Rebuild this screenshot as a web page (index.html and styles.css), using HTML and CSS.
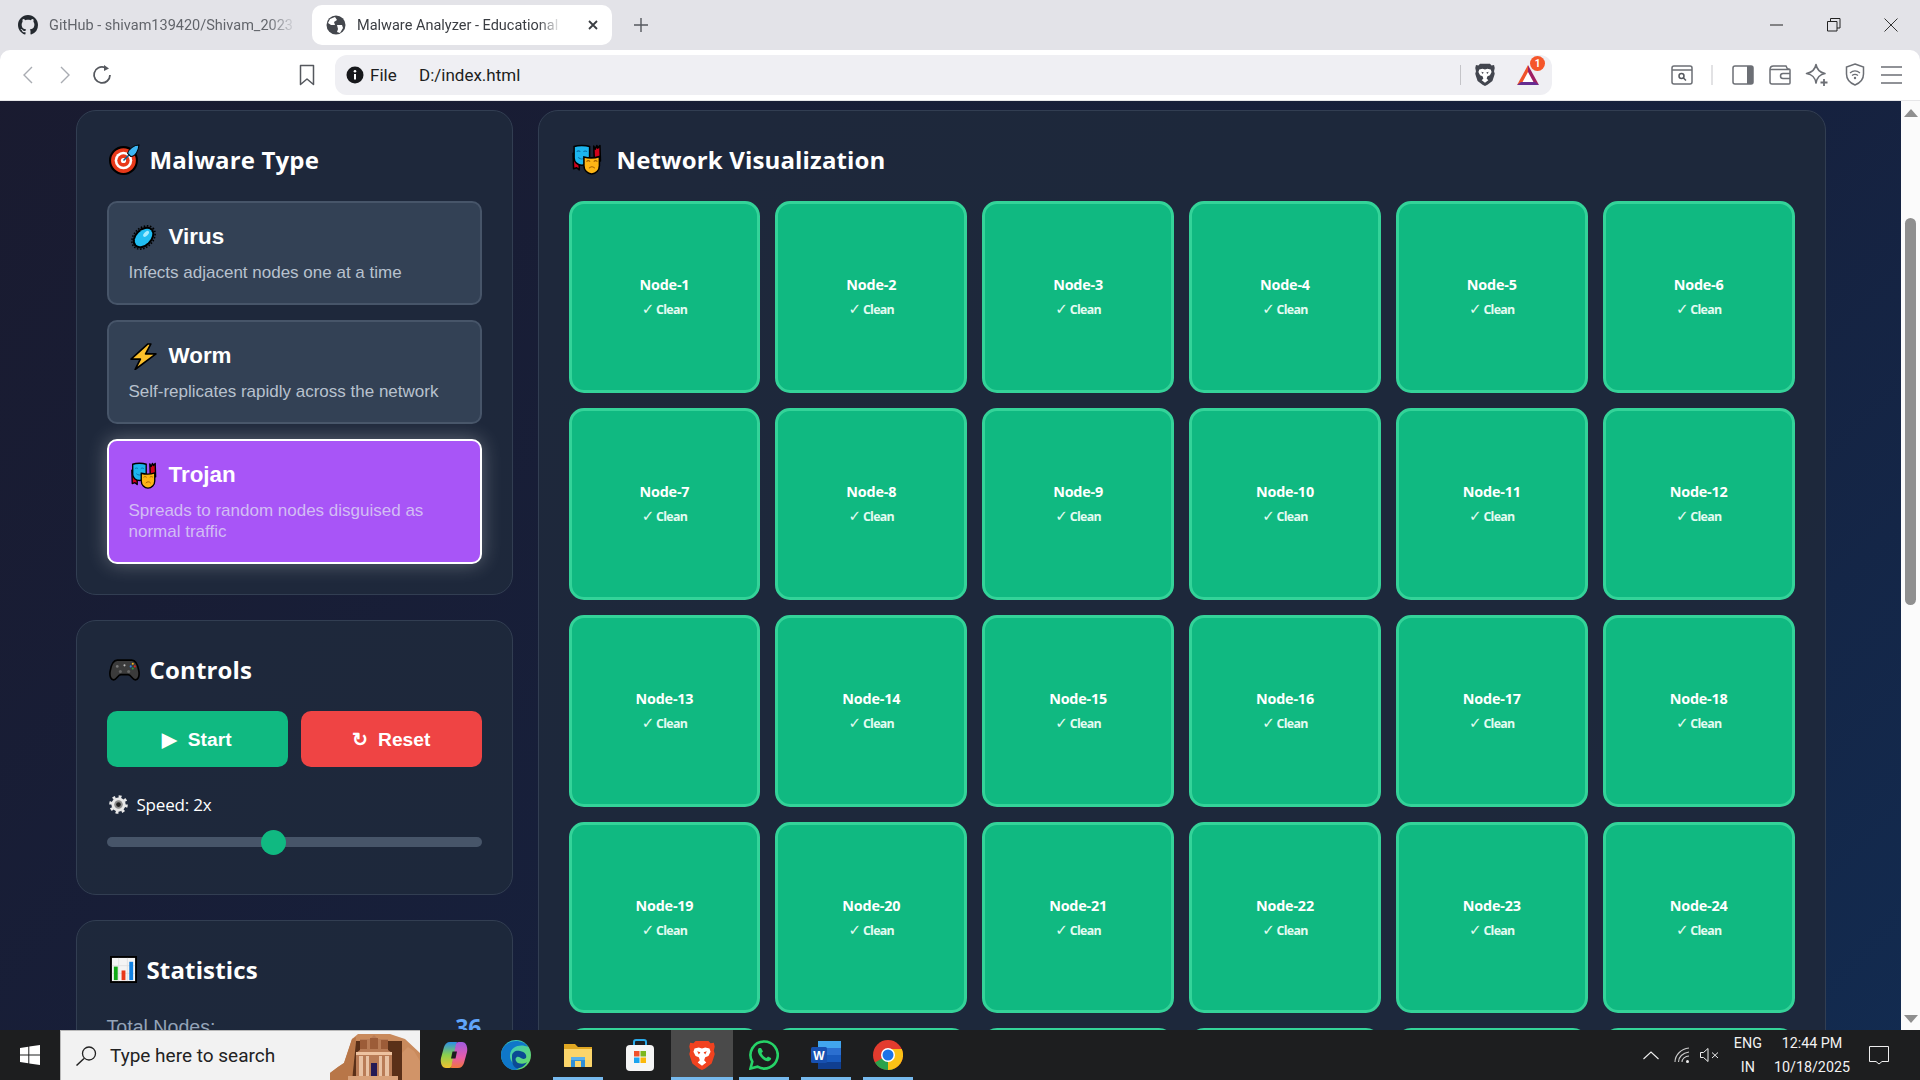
FILE: index.html
```html
<!DOCTYPE html>
<html lang="en">
<head>
<meta charset="utf-8">
<title>Malware Analyzer</title>
<link rel="stylesheet" href="styles.css">
</head>
<body>
<svg class="defs" width="0" height="0" aria-hidden="true">
  <symbol id="masks" viewBox="0 0 30 30">
    <path d="M2 9l.5 15 3-1 2.500 2V10z" fill="#d0021b" stroke="#000" stroke-width="1.500" stroke-linejoin="round"/>
    <path d="M22 2l1.500 3L25 1.500l1 2.500 2-2.500.5 15-6-2z" fill="#d0021b" stroke="#000" stroke-width="1.500" stroke-linejoin="round"/>
    <path d="M3 2.500c4-1.500 11-1.500 15 0v11c0 4-3.500 7-7.500 7S3 17.500 3 13.500z" fill="#1cb5ee" stroke="#000" stroke-width="1.500"/>
    <path d="M5.500 7.500c1-1 2.500-1 3.500 0M12 7.500c1-1 2.500-1 3.500 0M7 13c2 2 5 2 7 0" fill="none" stroke="#0a6fa8" stroke-width="1"/>
    <path d="M12.500 12.500c5 1.300 10 1.300 15-.5v9c0 4.500-3.500 8-7.500 8s-7.500-3.500-7.500-8z" fill="#fdb515" stroke="#000" stroke-width="1.500"/>
    <path d="M15 17c1-1 2.500-1 3.500 0M22 17c1-1 2.500-1 3.500 0M17.500 23.500c1.500-2 4-2 5.500 0" fill="none" stroke="#a35f00" stroke-width="1"/>
  </symbol>
  <symbol id="lion" viewBox="0 0 24 28">
    <path d="M6 1h12l2 2 3-.5L24 6l-1 4 1 3-3 9-6 4.500-3 1.500-3-1.500L3 22 0 13l1-3-1-4 1-3.500L4 3z" fill="currentColor"/>
    <path d="M5 8l4-1 3 1 3-1 4 1 1 3-2 4-3 1-1 3 2 2-4 3-4-3 2-2-1-3-3-1-2-4z" fill="#fff"/>
    <path d="M7.500 10.500l3 1-1.500 2zM16.500 10.500l-3 1 1.500 2z" fill="currentColor"/>
  </symbol>
</svg>
<div class="app">
  <header class="tabstrip">
    <div class="tab">
      <svg class="tab-ico" viewBox="0 0 16 16"><path fill="#24292f" d="M8 0C3.58 0 0 3.58 0 8c0 3.54 2.29 6.53 5.47 7.59.4.07.55-.17.55-.38 0-.19-.01-.82-.01-1.49-2.01.37-2.53-.49-2.69-.94-.09-.23-.48-.94-.82-1.13-.28-.15-.68-.52-.01-.53.63-.01 1.08.58 1.23.82.72 1.21 1.87.87 2.33.66.07-.52.28-.87.51-1.07-1.78-.2-3.64-.89-3.64-3.95 0-.87.31-1.59.82-2.15-.08-.2-.36-1.02.08-2.12 0 0 .67-.21 2.2.82.64-.18 1.32-.27 2-.27s1.36.09 2 .27c1.53-1.04 2.2-.82 2.2-.82.44 1.1.16 1.92.08 2.12.51.56.82 1.27.82 2.15 0 3.07-1.87 3.75-3.65 3.95.29.25.54.73.54 1.48 0 1.07-.01 1.93-.01 2.2 0 .21.15.46.55.38A8.013 8.013 0 0016 8c0-4.42-3.58-8-8-8z"/></svg>
      <span class="tab-title tab-title-dim">GitHub - shivam139420/Shivam_2023</span>
    </div>
    <div class="tab tab-active">
      <svg class="tab-ico tab-ico-globe" viewBox="0 0 20 20"><circle cx="10" cy="10" r="9.500" fill="#44474d"/><path d="M4 4l5-2 2 3-3 2 1 3-4 0-3-2zM11 10l5 0 1 3-3 5-3-1 1-3z" fill="#fff"/></svg>
      <span class="tab-title">Malware Analyzer - Educational Malware</span>
      <svg class="tab-close" viewBox="0 0 12 12"><path d="M2 2l8 8M10 2l-8 8" stroke="#3a3d42" stroke-width="1.800" fill="none"/></svg>
    </div>
    <svg class="newtab" viewBox="0 0 16 16"><path d="M8 1v14M1 8h14" stroke="#55585e" stroke-width="1.400" fill="none"/></svg>
    <div class="winctl">
      <svg class="winbtn" viewBox="0 0 14 14"><path d="M0 7h13" stroke="#222" stroke-width="1" fill="none"/></svg>
      <svg class="winbtn" viewBox="0 0 14 14"><path d="M.5 3.500h9.500v9.500H.5zM3.500 3.500V.5h9.500v9.500H10" stroke="#222" stroke-width="1" fill="none"/></svg>
      <svg class="winbtn" viewBox="0 0 14 14"><path d="M.5.5l13 13M13.500.5l-13 13" stroke="#333" stroke-width="1" fill="none"/></svg>
    </div>
  </header>

  <nav class="toolbar">
    <span class="tb-slot"><svg width="12" height="20" viewBox="0 0 12 20"><path d="M10 2L2 10l8 8" stroke="#a9acb2" stroke-width="1.400" fill="none"/></svg></span>
    <span class="tb-slot"><svg width="12" height="20" viewBox="0 0 12 20"><path d="M2 2l8 8-8 8" stroke="#a9acb2" stroke-width="1.400" fill="none"/></svg></span>
    <span class="tb-slot"><svg width="22" height="22" viewBox="0 0 22 22"><path d="M14 3.500A8 8 0 1 0 19 11" stroke="#55585e" stroke-width="1.800" fill="none"/><path d="M13 1l5 3.500-5 2.500z" fill="#55585e"/></svg></span>
    <span class="tb-slot tb-bookmark"><svg width="16" height="22" viewBox="0 0 16 22"><path d="M1.500 1.500h13v19L8 15l-6.500 5.500z" stroke="#55585e" stroke-width="1.500" fill="none" stroke-linejoin="round"/></svg></span>
    <div class="address">
      <svg class="info" viewBox="0 0 18 18"><circle cx="9" cy="9" r="8.500" fill="#17181b"/><path d="M9 8v5.500" stroke="#fff" stroke-width="2"/><circle cx="9" cy="5.200" r="1.300" fill="#fff"/></svg>
      <span class="addr-scheme">File</span>
      <span class="addr-url">D:/index.html</span>
      <span class="addr-fill"></span>
      <span class="addr-sep"></span>
      <svg class="addr-lion" viewBox="0 0 24 28"><use href="#lion"/></svg>
      <span class="bat">
        <svg width="24" height="22" viewBox="0 0 24 22"><path d="M12 1l11 20H1z" fill="#fff"/><path d="M12 1L1 21l5-2 6-11z" fill="#f0532b"/><path d="M12 1l11 20-5-2-6-11z" fill="#9e1f63"/><path d="M1 21h22l-4-3H5z" fill="#662d91"/></svg>
        <span class="bat-badge">1</span>
      </span>
    </div>
    <span class="tb-slot tb-gap-r"><svg width="22" height="20" viewBox="0 0 22 20"><rect x="1" y="1" width="20" height="18" rx="2" stroke="#6c6f75" stroke-width="1.500" fill="none"/><path d="M1 5h20" stroke="#6c6f75" stroke-width="1.500"/><circle cx="10.500" cy="11" r="2.500" stroke="#55585e" stroke-width="1.500" fill="none"/><path d="M12.500 13l2.500 2.500" stroke="#55585e" stroke-width="1.500"/></svg></span>
    <span class="tb-sep"></span>
    <span class="tb-slot"><svg width="22" height="20" viewBox="0 0 22 20"><rect x="1" y="1" width="20" height="18" rx="2" stroke="#6c6f75" stroke-width="1.500" fill="#fff"/><rect x="15" y="1" width="6" height="18" fill="#6c6f75"/></svg></span>
    <span class="tb-slot"><svg width="22" height="20" viewBox="0 0 22 20"><path d="M1 4.500C1 2.500 2.500 1 4.500 1H17l1.500 3H20a1 1 0 0 1 1 1v13a1 1 0 0 1-1 1H3a2 2 0 0 1-2-2z" stroke="#6c6f75" stroke-width="1.500" fill="none"/><path d="M1 4.500h19M21 8.500h-7a2 2 0 0 0 0 5h7" stroke="#6c6f75" stroke-width="1.500" fill="none"/></svg></span>
    <span class="tb-slot"><svg width="24" height="24" viewBox="0 0 24 24"><path d="M11 1.500c1 5.500 3.500 8 9 9-5.500 1-8 3.500-9 9.500-1-6-3.500-8.500-9.500-9.500 6-1 8.500-3.500 9.500-9z" stroke="#6c6f75" stroke-width="1.600" fill="none" stroke-linejoin="round"/><path d="M19 16v7M15.500 19.500h7" stroke="#6c6f75" stroke-width="1.800"/></svg></span>
    <span class="tb-slot tb-nudge"><svg width="20" height="23" viewBox="0 0 20 23"><path d="M10 1l8.500 3v7c0 5.500-3.500 9-8.500 11-5-2-8.500-5.500-8.500-11V4z" stroke="#6c6f75" stroke-width="1.500" fill="none"/><path d="M5 10c3-2.500 7-2.500 10 0M7 12.500c2-1.500 4-1.500 6 0" stroke="#6c6f75" stroke-width="1.300" fill="none"/><circle cx="10" cy="15" r="1.200" fill="#6c6f75"/></svg></span>
    <span class="tb-slot"><svg width="21" height="18" viewBox="0 0 21 18"><path d="M0 1h21M0 9h21M0 17h21" stroke="#6c6f75" stroke-width="1.500"/></svg></span>
  </nav>

  <main class="viewport">
    <div class="page">
      <div class="layout">
        <aside class="sidebar">
          <section class="panel">
            <h2 class="panel-title">
              <svg class="emoji-lg" viewBox="0 0 30 30">
                <circle cx="14" cy="16" r="13" fill="#e8391a" stroke="#000" stroke-width="2"/>
                <circle cx="14" cy="16" r="8.500" fill="#fff"/>
                <circle cx="14" cy="16" r="6" fill="#e8391a"/>
                <circle cx="14" cy="16" r="2.500" fill="#fff"/>
                <path d="M14 16l8-8" stroke="#0b5e8e" stroke-width="1.500"/>
                <path d="M18 9c1-4 6-8 11-8-.5 5-3 11-8 11z" fill="#3db5f2" stroke="#000" stroke-width="1"/>
              </svg>
              <span>Malware Type</span>
            </h2>
            <div class="type-list">
              <article class="type-card">
                <div class="type-head">
                  <svg class="emoji-md" viewBox="0 0 26 26">
                    <ellipse cx="13" cy="13" rx="12" ry="8.500" transform="rotate(-45 13 13)" fill="#000"/>
                    <ellipse cx="13" cy="13" rx="12.800" ry="9.300" transform="rotate(-45 13 13)" fill="none" stroke="#000" stroke-width="1.500" stroke-dasharray="1.500 1.500"/>
                    <ellipse cx="13" cy="13" rx="10" ry="6.500" transform="rotate(-45 13 13)" fill="#21bdf2"/>
                    <ellipse cx="15.500" cy="9.500" rx="3.500" ry="1.800" transform="rotate(-45 15.500 9.500)" fill="#a6ecff"/>
                  </svg>
                  <span class="type-name">Virus</span>
                </div>
                <p class="type-desc">Infects adjacent nodes one at a time</p>
              </article>
              <article class="type-card">
                <div class="type-head">
                  <svg class="emoji-md" viewBox="0 0 26 26"><path d="M17 1L1 15.500h9l-5 10 20-15H15l5-9.500z" fill="#fcc02b" stroke="#000" stroke-width="1.600" stroke-linejoin="round"/></svg>
                  <span class="type-name">Worm</span>
                </div>
                <p class="type-desc">Self-replicates rapidly across the network</p>
              </article>
              <article class="type-card type-card-active">
                <div class="type-head">
                  <svg class="emoji-md" viewBox="0 0 30 30"><use href="#masks"/></svg>
                  <span class="type-name">Trojan</span>
                </div>
                <p class="type-desc">Spreads to random nodes disguised as normal traffic</p>
              </article>
            </div>
          </section>

          <section class="panel">
            <h2 class="panel-title">
              <svg class="emoji-lg" viewBox="0 0 30 22">
                <path d="M8 2h14c4 0 6 5 7 11 .6 5-1 8-3.500 8-3 0-4-5-7-5h-7c-3 0-4 5-7 5C2 21 .4 18 1 13 2 7 4 2 8 2z" fill="#3b3b3b" stroke="#000" stroke-width="1.600"/>
                <circle cx="8" cy="8" r="1.300" fill="#777"/><circle cx="15" cy="7" r="1" fill="#bbb"/>
                <circle cx="23" cy="5.500" r="1" fill="#f3b61f"/><circle cx="21" cy="8" r="1" fill="#2a7de1"/><circle cx="25" cy="8" r="1" fill="#d9281e"/><circle cx="23" cy="10" r="1" fill="#2e9e3f"/>
                <circle cx="11" cy="13" r="1.500" fill="#666"/><circle cx="19" cy="13" r="1.500" fill="#666"/>
              </svg>
              <span>Controls</span>
            </h2>
            <div class="btn-row">
              <button class="btn btn-start">▶ Start</button>
              <button class="btn btn-reset">↻ Reset</button>
            </div>
            <div class="speed-label">
              <svg class="gear" viewBox="0 0 20 20">
                <circle cx="10" cy="10" r="7.500" fill="#e8e8e8"/>
                <circle cx="10" cy="10" r="8.300" fill="none" stroke="#e8e8e8" stroke-width="3" stroke-dasharray="3 3.500"/>
                <circle cx="10" cy="10" r="4.500" fill="#8d8d8d"/>
                <circle cx="10" cy="10" r="2.500" fill="#222"/>
              </svg>
              <span>Speed: 2x</span>
            </div>
            <div class="slider"><span class="slider-thumb"></span></div>
          </section>

          <section class="panel">
            <h2 class="panel-title panel-title-stat">
              <svg class="emoji-chart" viewBox="0 0 28 28">
                <rect x="1" y="1" width="26" height="26" fill="#f4f4f4" stroke="#000" stroke-width="2"/>
                <path d="M9 2v24M18 2v24M2 10h24M2 18h24" stroke="#ddd" stroke-width=".8"/>
                <rect x="4" y="11" width="4" height="14" fill="#12a815"/>
                <rect x="12" y="15" width="4" height="10" fill="#e8391a"/>
                <rect x="20" y="6" width="4" height="19" fill="#0f7fe0"/>
              </svg>
              <span>Statistics</span>
            </h2>
            <div class="stat-row"><span class="stat-name">Total Nodes:</span><span class="stat-value">36</span></div>
          </section>
        </aside>

        <section class="panel panel-net">
          <h2 class="panel-title panel-title-net">
            <svg class="emoji-lg" viewBox="0 0 30 30"><use href="#masks"/></svg>
            <span>Network Visualization</span>
          </h2>
          <div class="node-grid">
            <div class="node"><b>Node-1</b><small><i>✓</i> Clean</small></div>
            <div class="node"><b>Node-2</b><small><i>✓</i> Clean</small></div>
            <div class="node"><b>Node-3</b><small><i>✓</i> Clean</small></div>
            <div class="node"><b>Node-4</b><small><i>✓</i> Clean</small></div>
            <div class="node"><b>Node-5</b><small><i>✓</i> Clean</small></div>
            <div class="node"><b>Node-6</b><small><i>✓</i> Clean</small></div>
            <div class="node"><b>Node-7</b><small><i>✓</i> Clean</small></div>
            <div class="node"><b>Node-8</b><small><i>✓</i> Clean</small></div>
            <div class="node"><b>Node-9</b><small><i>✓</i> Clean</small></div>
            <div class="node"><b>Node-10</b><small><i>✓</i> Clean</small></div>
            <div class="node"><b>Node-11</b><small><i>✓</i> Clean</small></div>
            <div class="node"><b>Node-12</b><small><i>✓</i> Clean</small></div>
            <div class="node"><b>Node-13</b><small><i>✓</i> Clean</small></div>
            <div class="node"><b>Node-14</b><small><i>✓</i> Clean</small></div>
            <div class="node"><b>Node-15</b><small><i>✓</i> Clean</small></div>
            <div class="node"><b>Node-16</b><small><i>✓</i> Clean</small></div>
            <div class="node"><b>Node-17</b><small><i>✓</i> Clean</small></div>
            <div class="node"><b>Node-18</b><small><i>✓</i> Clean</small></div>
            <div class="node"><b>Node-19</b><small><i>✓</i> Clean</small></div>
            <div class="node"><b>Node-20</b><small><i>✓</i> Clean</small></div>
            <div class="node"><b>Node-21</b><small><i>✓</i> Clean</small></div>
            <div class="node"><b>Node-22</b><small><i>✓</i> Clean</small></div>
            <div class="node"><b>Node-23</b><small><i>✓</i> Clean</small></div>
            <div class="node"><b>Node-24</b><small><i>✓</i> Clean</small></div>
            <div class="node"></div>
            <div class="node"></div>
            <div class="node"></div>
            <div class="node"></div>
            <div class="node"></div>
            <div class="node"></div>
          </div>
        </section>
      </div>
    </div>
    <div class="scrollbar">
      <svg class="sb-arrow" viewBox="0 0 14 8"><path d="M7 0l7 8H0z" fill="#8f8f8f"/></svg>
      <div class="sb-track"><span class="sb-thumb"></span></div>
      <svg class="sb-arrow" viewBox="0 0 14 8"><path d="M0 0h14L7 8z" fill="#8f8f8f"/></svg>
    </div>
  </main>

  <footer class="taskbar">
    <span class="start-btn"><svg width="20" height="20" viewBox="0 0 20 20"><path d="M0 3l8.300-1.200v7.700H0zM9.300 1.600L20 0v9.500H9.300zM0 10.500h8.300v7.700L0 17zM9.300 10.500H20V20L9.300 18.400z" fill="#fff"/></svg></span>
    <div class="searchbox">
      <svg class="search-ico" viewBox="0 0 22 20"><circle cx="14" cy="7.500" r="6.500" stroke="#222" stroke-width="1.300" fill="none"/><path d="M9 12.500L1.500 19.500" stroke="#222" stroke-width="1.500"/></svg>
      <span class="search-text">Type here to search</span>
      <svg class="doodle" viewBox="0 0 90 50">
        <path d="M0 50V42l8-6 6-4 8-24 6-5h32l15 5 15 14v28z" fill="#c98a5c"/>
        <path d="M0 50V42l8-6 6-4 8-24 4-2-4 44z" fill="#b87648"/>
        <path d="M22 50l4-40h46v40z" fill="#5a3018"/>
        <path d="M26 50V22l4-3V8h10l4-4 4 4h10v11l4 3v28z" fill="#b97c56"/>
        <path d="M30 9h7v9h-7zM51 9h7v9h-7zM40 7h8v11h-8z" fill="#9c5c38"/>
        <path d="M26 21h36v3H26z" fill="#eec3a0"/>
        <path d="M29 25h4v20h-4zM55 25h4v20h-4zM36 25h3v20h-3zM49 25h3v20h-3z" fill="#e9c3a4"/>
        <rect x="41" y="32" width="6" height="13" fill="#241a55"/>
        <path d="M18 45h50v5H18z" fill="#d9a27a"/>
        <path d="M72 50V22l6-6 6 4 6 10v20z" fill="#d19468"/>
      </svg>
    </div>
    <div class="tb-apps">
      <span class="app-slot">
        <svg width="28" height="28" viewBox="0 0 28 28">
          <defs><linearGradient id="cp1" x1="0" y1="0" x2="0" y2="1"><stop offset="0" stop-color="#2b8fe8"/><stop offset=".5" stop-color="#8ad04c"/><stop offset="1" stop-color="#f2c230"/></linearGradient>
          <linearGradient id="cp2" x1="0" y1="0" x2="0" y2="1"><stop offset="0" stop-color="#a05be0"/><stop offset=".6" stop-color="#e85ca8"/><stop offset="1" stop-color="#f0763c"/></linearGradient></defs>
          <path d="M10 1h7l-5 24c-1 2-2 2-4 2H6C2 27 0 22 1 17L4 6c1-3 3-5 6-5z" fill="url(#cp1)"/>
          <path d="M18 27h-7l5-24c1-2 2-2 4-2h2c4 0 6 5 5 10l-3 11c-1 3-3 5-6 5z" fill="url(#cp2)"/>
          <path d="M12.500 10.500h4.500l-1.500 7H11z" fill="#1d1e1f"/>
        </svg>
      </span>
      <span class="app-slot">
        <svg width="30" height="30" viewBox="0 0 30 30">
          <defs><linearGradient id="ed1" x1="0" y1="0" x2="1" y2="1"><stop offset="0" stop-color="#30c5d8"/><stop offset="1" stop-color="#6fdc5a"/></linearGradient></defs>
          <circle cx="15" cy="15" r="15" fill="url(#ed1)"/>
          <path d="M0 15C0 6 8 1 15 1c5 0 10 2 12 6-6-3-17-2-18 8-.6 6 5 11 10 12-1 1.500-3 3-5 3C6 30 0 23 0 15z" fill="#0f77c9"/>
          <path d="M11 16c0-4 4-6 8-5 5 1 7 4 6 7-4 3-6-2-9-1-2 1-2 4 1 6 3 1 7 1 9-1-2 4-7 7-11 6-4-2-4-8-4-12z" fill="#0b4a94"/>
        </svg>
      </span>
      <span class="app-slot app-open">
        <svg width="28" height="26" viewBox="0 0 28 26"><path d="M0 2h11l3 3h14v19a1 1 0 0 1-1 1H1a1 1 0 0 1-1-1z" fill="#e0a722"/><path d="M0 7h28v17a1 1 0 0 1-1 1H1a1 1 0 0 1-1-1z" fill="#fbd56b"/><path d="M7 25V15h14v10h-4v-6h-6v6z" fill="#2f8fd8"/><path d="M7 15h14v3H7z" fill="#5ab0ec"/></svg>
      </span>
      <span class="app-slot">
        <svg width="30" height="32" viewBox="0 0 30 32"><path d="M9 8V3a2 2 0 0 1 2-2h8a2 2 0 0 1 2 2v5" stroke="#2aa9e8" stroke-width="2" fill="none"/><rect x="1" y="6" width="28" height="26" rx="4" fill="#f5f5f5"/><rect x="9" y="12" width="5.500" height="5.500" fill="#f0502a"/><rect x="15.500" y="12" width="5.500" height="5.500" fill="#7db81f"/><rect x="9" y="18.500" width="5.500" height="5.500" fill="#1ba4ef"/><rect x="15.500" y="18.500" width="5.500" height="5.500" fill="#fbb80a"/></svg>
      </span>
      <span class="app-slot app-open app-focus">
        <svg class="brave-ico" viewBox="0 0 24 28"><use href="#lion"/></svg>
      </span>
      <span class="app-slot app-open">
        <svg width="30" height="30" viewBox="0 0 30 30"><path d="M15 1.500A13.500 13.500 0 0 0 3.300 21.700L1.500 28.500l7-1.800A13.500 13.500 0 1 0 15 1.500z" fill="none" stroke="#26d367" stroke-width="2.600"/><path d="M10 8c-1.500 1.500-2 4 1 8s6.500 6 9 5c1.500-.6 2.500-2 2-3l-3-1.500-1.500 1.500c-2-.5-4-2.500-5-5l1.500-1.500L12 8z" fill="#26d367"/></svg>
      </span>
      <span class="app-slot app-open">
        <svg width="30" height="28" viewBox="0 0 30 28"><rect x="7" y="0" width="23" height="28" rx="2" fill="#2b6fd0"/><path d="M7 0h23v7H7z" fill="#41a5ee"/><path d="M7 14h23v7H7z" fill="#185abd"/><path d="M7 21h23v7H7z" fill="#103f91"/><rect x="0" y="6" width="16" height="16" rx="1.500" fill="#1750b0"/><text class="word-w" x="8" y="18.500" text-anchor="middle">W</text></svg>
      </span>
      <span class="app-slot app-open">
        <svg width="30" height="30" viewBox="0 0 30 30"><circle cx="15" cy="15" r="15" fill="#e33b2e"/><path d="M15 15L2 22.500A15 15 0 0 0 15 30c2 0 4-.3 5.500-1z" fill="#2aa24b"/><path d="M15 9h13.800A15 15 0 0 1 15 30z" fill="#fbc116"/><circle cx="15" cy="15" r="7" fill="#fff"/><circle cx="15" cy="15" r="5.500" fill="#1a73e8"/></svg>
      </span>
    </div>
    <div class="tray">
      <svg class="tray-chev" viewBox="0 0 16 9"><path d="M.5 8L8 1l7.500 7" stroke="#eee" stroke-width="1.100" fill="none"/></svg>
      <svg class="tray-wifi" viewBox="0 0 16 16"><path d="M1 15C1 8 7 2 15 1M4.500 15c0-5 4-9 10.500-10M8 15c0-3 3-6 7-6" stroke="#ccc" stroke-width="1.100" fill="none"/><circle cx="13.500" cy="14.500" r="1.500" fill="#eee"/></svg>
      <svg class="tray-vol" viewBox="0 0 19 14"><path d="M.5 4.500h3L8 .5v13l-4.500-4h-3z" stroke="#eee" stroke-width="1" fill="none"/><path d="M12 4.500l6 5.500M18 4.500L12 10" stroke="#eee" stroke-width="1" fill="none"/></svg>
      <div class="tray-lang"><span>ENG</span><span>IN</span></div>
      <div class="tray-clock"><span>12:44 PM</span><span>10/18/2025</span></div>
      <svg class="tray-note" viewBox="0 0 20 19"><path d="M.5.5h19v15H13l-3 2.500-3-2.500H.5z" stroke="#eee" stroke-width="1" fill="none"/></svg>
    </div>
  </footer>
</div>
</body>
</html>
```
FILE: styles.css
```css
* { box-sizing: border-box; }
html, body { margin: 0; height: 100%; overflow: hidden; }
body { font-family: "Noto Sans", "Open Sans", sans-serif; color: #fff; }
.defs { position: absolute; }
.app { height: 100vh; display: flex; flex-direction: column; background: #e3e3e8; }

/* browser tabs */
.tabstrip { height: 50px; flex: none; display: flex; align-items: center; padding-left: 5px; color: #3a3d42; font-family: Roboto, sans-serif; font-size: 14.5px; }
.tab { width: 300px; height: 40px; display: flex; align-items: center; padding-left: 13px; border-radius: 10px; margin-right: 7px; }
.tab-active { background: #fff; padding-left: 14px; padding-right: 11px; margin-right: 0; }
.tab-ico { width: 20px; height: 20px; flex: none; margin-right: 11px; }
.tab-ico-globe { margin-right: 11px; }
.tab-title { flex: none; width: 205px; white-space: nowrap; overflow: hidden; -webkit-mask-image: linear-gradient(90deg, #000 88%, transparent); mask-image: linear-gradient(90deg, #000 88%, transparent); }
.tab:not(.tab-active) .tab-title { width: 248px; }
.tab-title-dim { color: #62656b; }
.tab-close { width: 12px; height: 12px; margin-left: 25px; flex: none; }
.newtab { width: 16px; height: 16px; margin-left: 21px; flex: none; }
.winctl { margin-left: auto; display: flex; align-items: center; gap: 43px; padding-right: 22px; }
.winbtn { width: 14px; height: 14px; display: block; }

/* toolbar */
.toolbar { height: 51px; flex: none; display: flex; align-items: center; padding: 0 0 1px 9px; background: #fff; border-bottom: 1px solid #e6e6e8; border-radius: 10px 10px 0 0; font-family: Roboto, sans-serif; }
.tb-slot { width: 37px; flex: none; display: flex; align-items: center; justify-content: center; }
.tb-bookmark { margin-left: 168px; }
.tb-gap-r { margin-left: 111px; }
.tb-nudge { margin-left: 1px; }
.tb-sep { width: 2px; height: 20px; background: #e2e2e4; margin: 0 11px 0 11px; flex: none; }
.address { width: 1217px; height: 40px; margin-left: 10px; background: #efeff3; border-radius: 12px; display: flex; align-items: center; padding-left: 11px; font-size: 17px; color: #1d1e21; flex: none; }
.info { width: 18px; height: 18px; margin-right: 6px; flex: none; }
.addr-scheme { width: 49px; flex: none; }
.addr-url { flex: none; }
.addr-fill { flex: 1; }
.addr-sep { width: 1px; height: 20px; background: #c4c4c8; flex: none; margin-right: 14px; }
.addr-lion { width: 20px; height: 23px; color: #43464f; flex: none; margin-right: 21px; }
.bat { position: relative; display: flex; margin-right: 12px; width: 24px; flex: none; }
.bat-badge { position: absolute; top: -8px; left: 14px; width: 15px; height: 15px; border-radius: 50%; background: #f5562a; color: #fff; font-size: 10px; font-weight: 700; line-height: 15px; text-align: center; }

/* page area */
.viewport { flex: 1; min-height: 0; display: flex; overflow: hidden; }
.page { flex: 1; min-width: 0; padding-top: 9px; background: linear-gradient(135deg, #1a1a2e 0%, #16213e 50%, #0f3460 100%) 0 -235px / 100% 2138px no-repeat; }
.layout { width: 1750px; margin: 0 auto; display: grid; grid-template-columns: 437px 1288px; gap: 25px; align-items: start; }
.sidebar { display: flex; flex-direction: column; gap: 25px; }
.panel { background: rgba(30, 41, 59, .96); border: 1px solid #323e52; border-radius: 20px; padding: 30px; }
.panel-title { margin: 0 0 27px; padding-top: 3px; display: flex; align-items: center; gap: 10px; height: 33px; font-family: "Open Sans", sans-serif; font-size: 24px; font-weight: 700; letter-spacing: .15px; color: #fff; }
.panel-title-stat { gap: 10px; }
.panel-title-net { gap: 15px; }
.emoji-lg { width: 31px; height: 31px; flex: none; margin-left: 2px; }
.emoji-md { width: 27px; height: 27px; flex: none; margin-left: 1px; }
.emoji-chart { width: 27px; height: 27px; flex: none; margin-left: 3px; }

.type-list { display: flex; flex-direction: column; gap: 15px; }
.type-card { border: 2px solid #475569; border-radius: 10px; background: #334155; padding: 21px 20px 20px; font-family: "Liberation Sans", Arial, sans-serif; }
.type-card-active { background: #a855f7; border-color: #fff; box-shadow: 0 0 20px rgba(255, 255, 255, .3); }
.type-head { display: flex; align-items: center; gap: 12px; height: 26px; margin-bottom: 12px; }
.type-name { font-size: 22.400px; font-weight: 700; color: #fff; }
.type-desc { margin: 0; font-size: 17px; line-height: 21px; color: #b8c1ce; }
.type-card-active .type-desc { color: #d2bdf4; }

.btn-row { display: grid; grid-template-columns: 1fr 1fr; gap: 13px; }
.btn { height: 56px; border: 0; border-radius: 10px; font: 700 19.200px "Liberation Sans", Arial, sans-serif; word-spacing: 5px; color: #fff; }
.btn-start { background: #10b981; }
.btn-reset { background: #ef4444; }
.speed-label { display: flex; align-items: center; gap: 9px; margin-top: 25px; padding-left: 2px; height: 24px; font-family: "Open Sans", sans-serif; font-size: 17px; letter-spacing: -.2px; color: #fff; }
.gear { width: 19px; height: 19px; flex: none; }
.slider { position: relative; height: 10px; margin: 21px 0 17px; background: #475569; border-radius: 5px; }
.slider-thumb { position: absolute; left: 154px; top: -7.500px; width: 25px; height: 25px; border-radius: 50%; background: #10b981; }

.stat-row { display: flex; justify-content: space-between; align-items: center; margin-top: 3px; font-family: "Liberation Sans", Arial, sans-serif; font-size: 19.600px; color: #94a3b8; }
.stat-value { font-size: 23px; font-weight: 700; color: #60a5fa; font-family: "Open Sans", sans-serif; }

.panel-net { padding-bottom: 30px; }
.node-grid { display: grid; grid-template-columns: repeat(6, 1fr); gap: 15px; }
.node { aspect-ratio: 1; display: flex; flex-direction: column; align-items: center; justify-content: center; gap: 8px; background: #10b981; border: 3px solid #34d399; border-radius: 15px; font-family: "Open Sans", sans-serif; color: #fff; }
.node b { font-size: 14.400px; line-height: 18px; letter-spacing: -.2px; }
.node small { font-size: 12.400px; line-height: 15px; font-weight: 700; letter-spacing: -.7px; color: #e4fbf2; }
.node i { font: 700 15px/15px "DejaVu Sans", sans-serif; }

.scrollbar { width: 19px; flex: none; background: #fbfbfb; display: flex; flex-direction: column; align-items: center; padding: 8px 0 7px; }
.sb-arrow { width: 14px; height: 8px; flex: none; }
.sb-track { flex: 1; width: 100%; padding-top: 101px; display: flex; justify-content: center; }
.sb-thumb { width: 11px; height: 387px; border-radius: 6px; background: #8f8f8f; }

/* taskbar */
.taskbar { height: 50px; flex: none; display: flex; background: #1d1e1f; font-family: Roboto, sans-serif; color: #f2f2f2; }
.start-btn { width: 60px; display: flex; align-items: center; justify-content: center; flex: none; }
.searchbox { width: 360px; flex: none; background: #f2f2f2; border: 1px solid #b9b9b9; border-right: 0; border-bottom: 0; display: flex; align-items: center; padding-left: 14px; overflow: hidden; color: #222; font-size: 19px; }
.search-ico { width: 22px; height: 20px; flex: none; margin-right: 13px; }
.search-text { flex: 1; white-space: nowrap; }
.doodle { width: 90px; height: 50px; flex: none; }
.tb-apps { display: flex; margin-left: 3px; }
.app-slot { width: 62px; display: flex; align-items: center; justify-content: center; position: relative; flex: none; }
.app-open::after { content: ""; position: absolute; left: 6px; right: 6px; bottom: 0; height: 3px; background: #76b9ed; }
.app-focus { background: #4a4a4a; }
.app-focus::after { left: 0; right: 0; }
.brave-ico { width: 26px; height: 30px; color: #f1421f; }
.word-w { font: 700 12px "Liberation Sans", Arial, sans-serif; fill: #fff; }
.tray { margin-left: auto; display: flex; align-items: center; font-size: 14.300px; line-height: 24px; }
.tray-chev { width: 16px; height: 9px; margin-right: 15px; }
.tray-wifi { width: 16px; height: 16px; margin-right: 10px; }
.tray-vol { width: 19px; height: 14px; margin-right: 15px; }
.tray-lang, .tray-clock { display: flex; flex-direction: column; align-items: center; }
.tray-lang { margin-right: 12px; }
.tray-clock { margin-right: 19px; }
.tray-note { width: 20px; height: 19px; margin-right: 31px; }
```
